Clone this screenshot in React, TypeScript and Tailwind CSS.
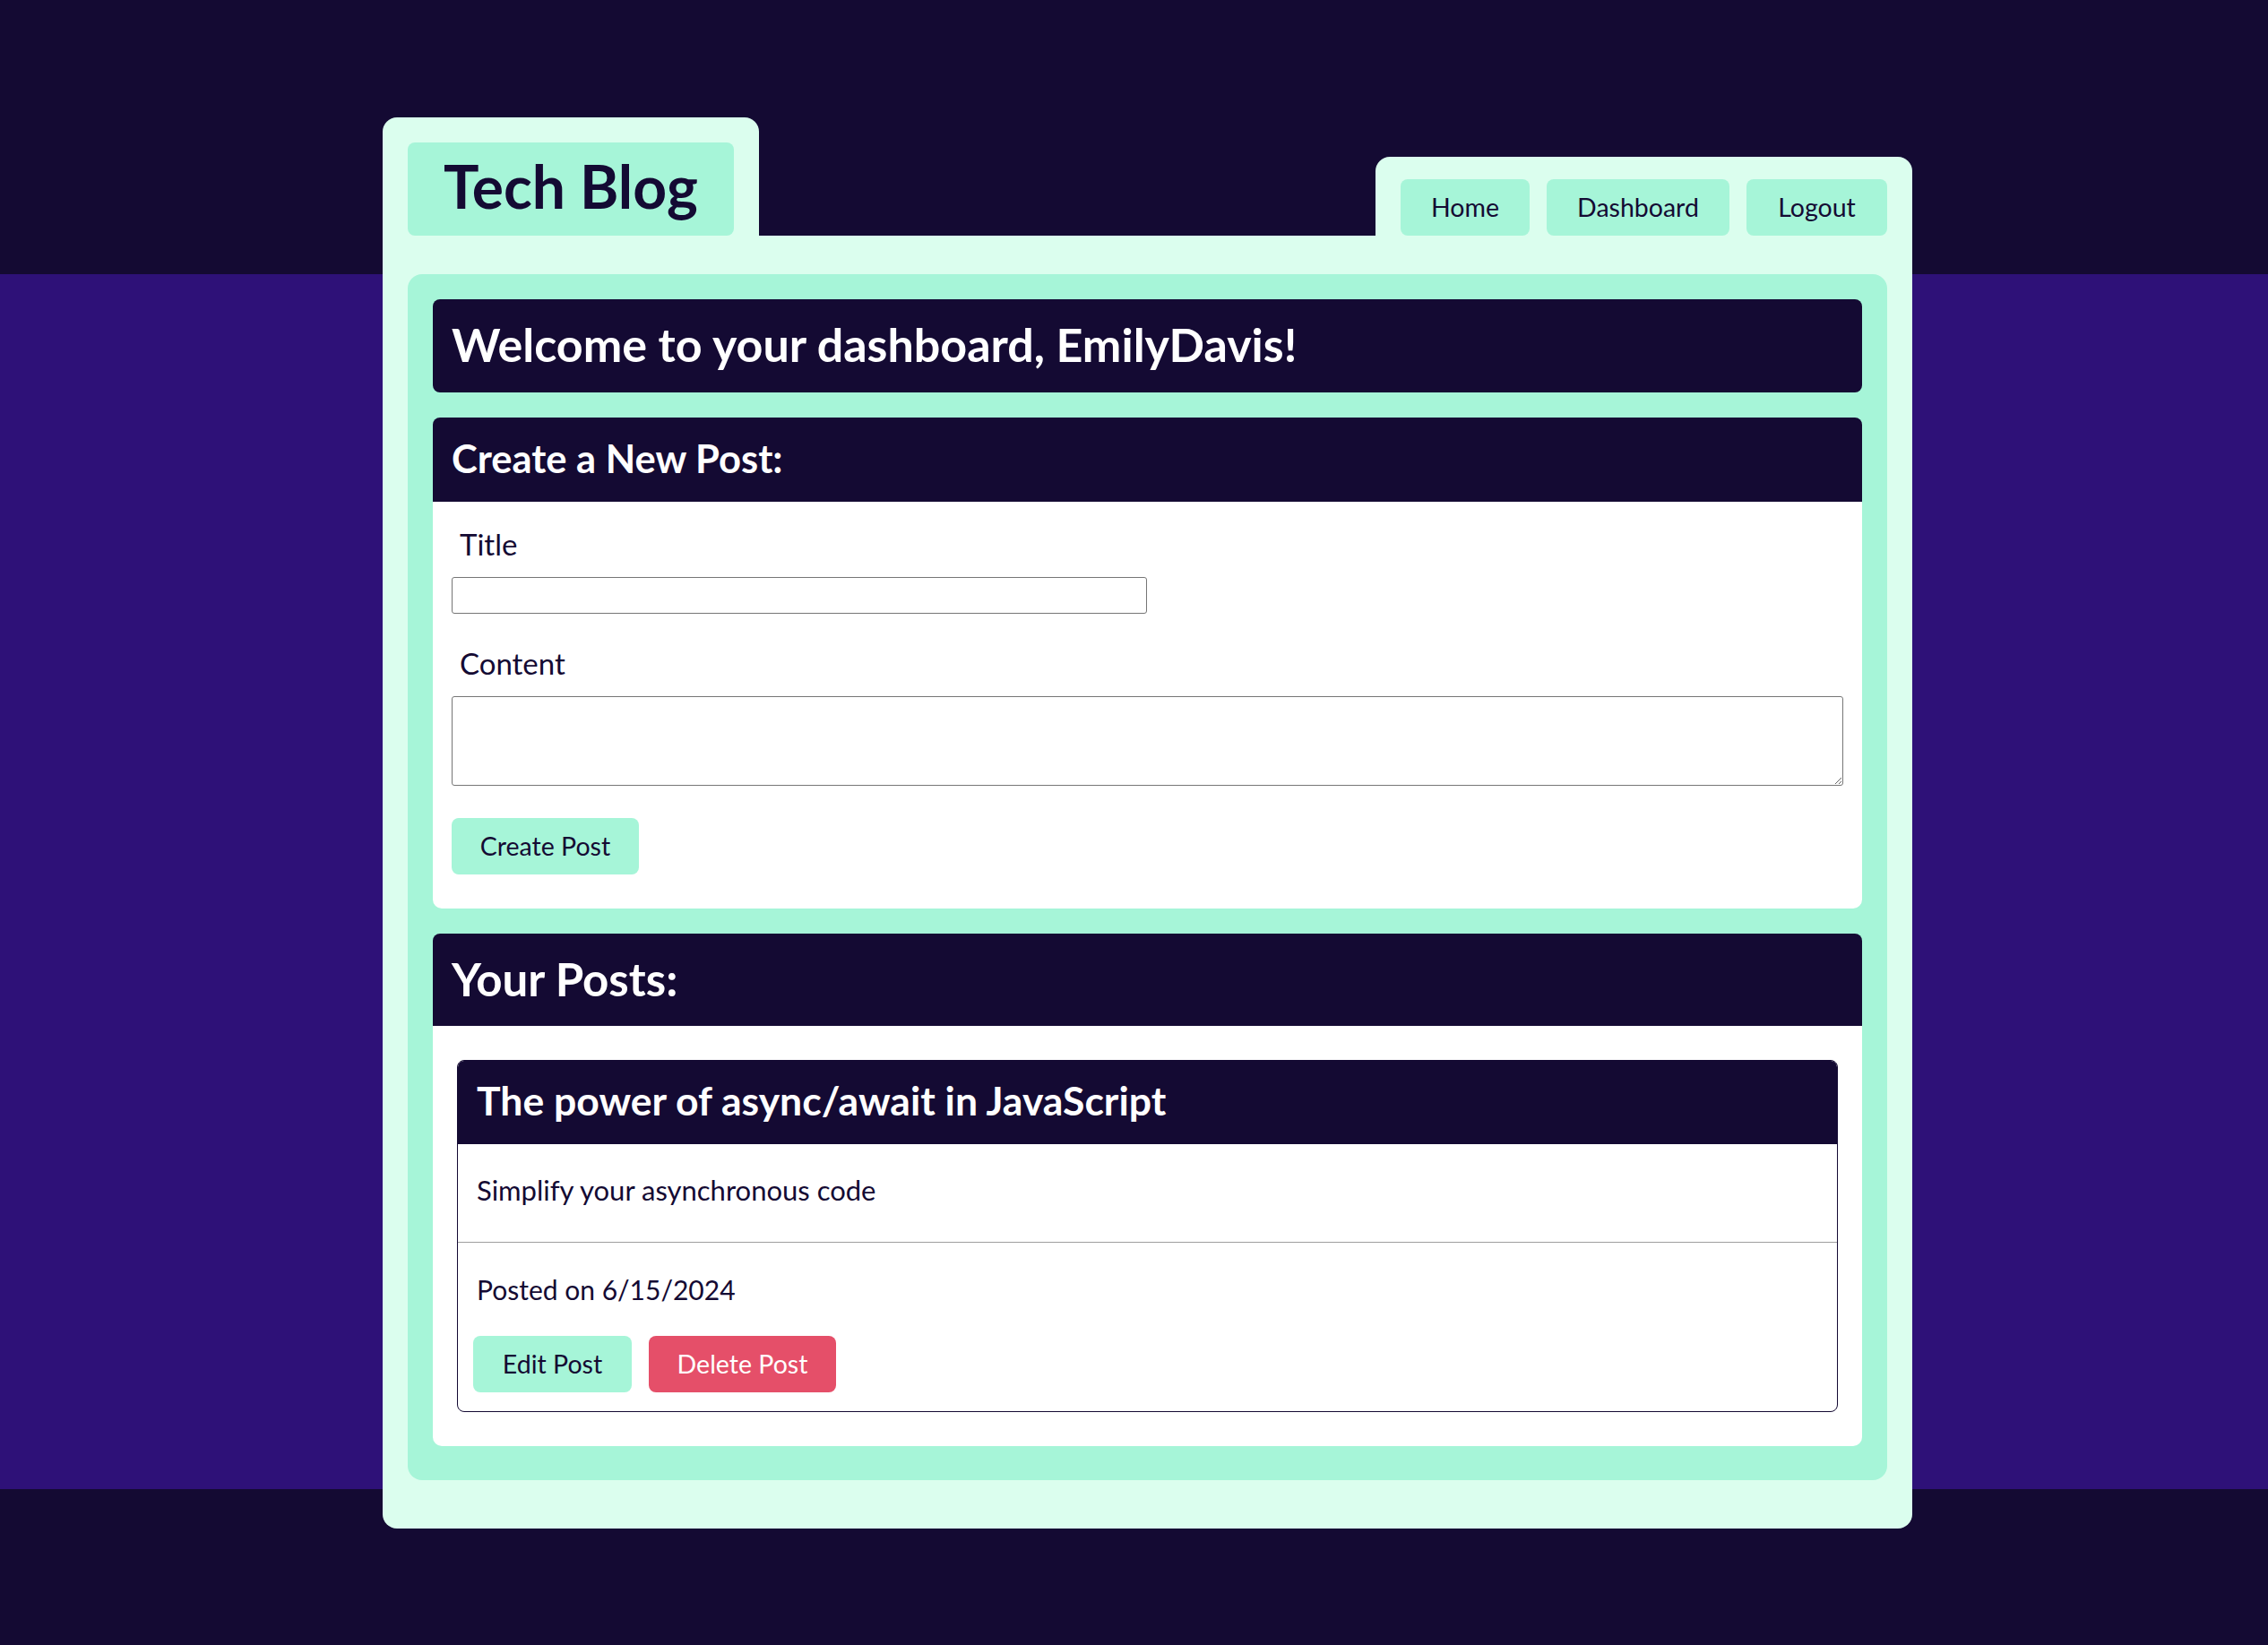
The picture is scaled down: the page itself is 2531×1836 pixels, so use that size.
import { useState } from "react";

type NavLink = {
  label: string;
  width: string;
};

const NAV_LINKS: NavLink[] = [
  { label: "Home", width: "w-[144px]" },
  { label: "Dashboard", width: "w-[204px]" },
  { label: "Logout", width: "w-[157px]" },
];

function Header() {
  return (
    <header className="flex h-[132px] items-end justify-between">
      {/* Site title tab */}
      <div className="h-full rounded-t-2xl bg-[#dbfeee] px-[28px] pt-[28px]">
        <div className="flex h-[104px] w-[364px] items-center rounded-lg bg-[#a6f5d8] pb-[6px] pl-[40px]">
          <h1 className="text-[66px] font-bold leading-none text-[#140a33]">
            Tech Blog
          </h1>
        </div>
      </div>

      {/* Nav tab */}
      <nav className="flex h-[88px] items-end gap-[19px] rounded-t-2xl bg-[#dbfeee] px-[28px]">
        {NAV_LINKS.map((link) => (
          <a
            key={link.label}
            href="#"
            className={`flex h-[63px] ${link.width} items-center justify-center rounded-lg bg-[#a6f5d8] text-[28.5px] text-[#140a33]`}
          >
            {link.label}
          </a>
        ))}
      </nav>
    </header>
  );
}

function NewPostForm() {
  const [title, setTitle] = useState("");
  const [content, setContent] = useState("");

  return (
    <section className="rounded-[10px] bg-white">
      <h2 className="h-[94px] rounded-t-lg bg-[#140a33] pl-[21px] text-[43.5px] font-bold leading-[90px] text-white">
        Create a New Post:
      </h2>
      <form
        className="flex flex-col items-start px-[21px] pb-[38px]"
        onSubmit={(e) => e.preventDefault()}
      >
        <label className="ml-[9px] mt-[27px] text-[33px] leading-[40px] text-[#140a33]">
          Title
        </label>
        <input
          value={title}
          onChange={(e) => setTitle(e.target.value)}
          className="mt-[17px] h-[41px] w-[776px] rounded-[3px] border border-[#767676] bg-white"
        />
        <label className="ml-[9px] mt-[35px] text-[33px] leading-[40px] text-[#140a33]">
          Content
        </label>
        <textarea
          value={content}
          onChange={(e) => setContent(e.target.value)}
          className="mt-[17px] h-[100px] w-full rounded-[3px] border border-[#767676] bg-white"
        />
        <button className="mt-[36px] h-[63px] w-[209px] rounded-lg bg-[#a6f5d8] text-[28.5px] text-[#140a33]">
          Create Post
        </button>
      </form>
    </section>
  );
}

function PostCard() {
  return (
    <article className="overflow-hidden rounded-lg border border-[#140a33]">
      <h3 className="h-[93px] bg-[#140a33] pl-[21px] text-[44.5px] font-bold leading-[88px] text-white">
        The power of async/await in JavaScript
      </h3>
      <p className="border-b border-[#9e9e9e] px-[21px] pb-[34px] pt-[27px] text-[31px] leading-[48px] text-[#140a33]">
        Simplify your asynchronous code
      </p>
      <div className="px-[17px] pb-[21px] pt-[28px]">
        <p className="pl-[4px] text-[30px] leading-[48px] text-[#140a33]">
          Posted on 6/15/2024
        </p>
        <div className="mt-[28px] flex gap-[19px]">
          <button className="h-[63px] w-[177px] rounded-lg bg-[#a6f5d8] text-[28.5px] text-[#140a33]">
            Edit Post
          </button>
          <button className="h-[63px] w-[209px] rounded-lg bg-[#e54f69] text-[28.5px] text-white">
            Delete Post
          </button>
        </div>
      </div>
    </article>
  );
}

export default function App() {
  return (
    <div className="min-h-[1836px] bg-[linear-gradient(to_bottom,#140a33_0px,#140a33_306px,#2e1178_306px,#2e1178_1662px,#140a33_1662px)] pb-[128px] pt-[131px] font-['Lato','Liberation_Sans',sans-serif]">
      <div className="ml-[427px] w-[1707px]">
        <Header />

        <div className="rounded-b-2xl bg-[#dbfeee] px-[28px] pb-[54px] pt-[43px]">
          <main className="flex flex-col gap-[28px] rounded-2xl bg-[#a6f5d8] px-[28px] pb-[38px] pt-[28px]">
            <h2 className="h-[104px] rounded-lg bg-[#140a33] pl-[21px] text-[52px] font-bold leading-[100px] text-white">
              Welcome to your dashboard, EmilyDavis!
            </h2>

            <NewPostForm />

            <section className="rounded-[10px] bg-white">
              <h2 className="h-[103px] rounded-t-lg bg-[#140a33] pl-[21px] text-[51px] font-bold leading-[102px] text-white">
                Your Posts:
              </h2>
              <div className="px-[27px] py-[38px]">
                <PostCard />
              </div>
            </section>
          </main>
        </div>
      </div>
    </div>
  );
}
